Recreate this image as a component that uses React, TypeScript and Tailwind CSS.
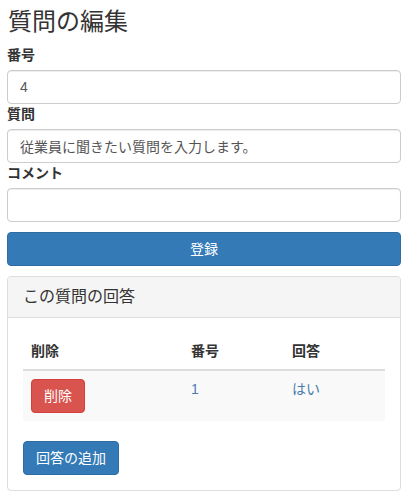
import React from "react"

const font = { fontFamily: '"Liberation Sans", "Noto Sans CJK JP", sans-serif' }

function Field({ label, value }: { label: string; value?: string }) {
  return (
    <div>
      <label className="block h-[20px] leading-[20px] mb-[5px] text-[14px] font-bold text-[#333]">{label}</label>
      <input
        type="text"
        defaultValue={value}
        className="block w-full h-[34px] px-[12px] border border-[#ccc] rounded-[4px] text-[14px] text-[#555] bg-white shadow-[inset_0_1px_1px_rgba(0,0,0,0.075)] outline-none"
      />
    </div>
  )
}

export default function App() {
  return (
    <div style={font} className="bg-white text-[#333] text-[14px] pl-[7px] pr-[10px] pt-[8px] min-h-[498px]">
      <h1 className="h-[27px] leading-[27px] text-[24px] font-normal text-[#333] mb-[10px] ml-px">質問の編集</h1>

      <Field label="番号" value="4" />
      <Field label="質問" value="従業員に聞きたい質問を入力します。" />
      <Field label="コメント" />

      <button className="mt-[10px] w-full h-[34px] rounded-[4px] bg-[#337ab7] border border-[#2e6da4] text-white text-[14px]">
        登録
      </button>

      <div className="mt-[10px] border border-[#ddd] rounded-[4px] bg-white">
        <div className="h-[41px] px-[15px] flex items-center bg-[#f5f5f5] border-b border-[#ddd] rounded-t-[3px] text-[16px] text-[#333]">
          この質問の回答
        </div>
        <div className="p-[15px]">
          <table className="w-full border-collapse mb-[20px]">
            <thead>
              <tr className="border-b-2 border-[#ddd]">
                <th className="w-[160px] p-[8px] text-left font-bold text-[14px] leading-[20px]">削除</th>
                <th className="w-[101px] p-[8px] text-left font-bold text-[14px] leading-[20px]">番号</th>
                <th className="p-[8px] text-left font-bold text-[14px] leading-[20px]">回答</th>
              </tr>
            </thead>
            <tbody>
              <tr className="bg-[#f9f9f9]">
                <td className="p-[8px] align-top">
                  <button className="h-[34px] px-[12px] rounded-[4px] bg-[#d9534f] border border-[#d43f3a] text-white text-[14px]">
                    削除
                  </button>
                </td>
                <td className="p-[8px] align-top leading-[20px] text-[#4a7bb0]">1</td>
                <td className="p-[8px] align-top leading-[20px] text-[#4a7bb0]">はい</td>
              </tr>
            </tbody>
          </table>
          <button className="h-[34px] px-[12px] rounded-[4px] bg-[#337ab7] border border-[#2e6da4] text-white text-[14px]">
            回答の追加
          </button>
        </div>
      </div>
    </div>
  )
}
